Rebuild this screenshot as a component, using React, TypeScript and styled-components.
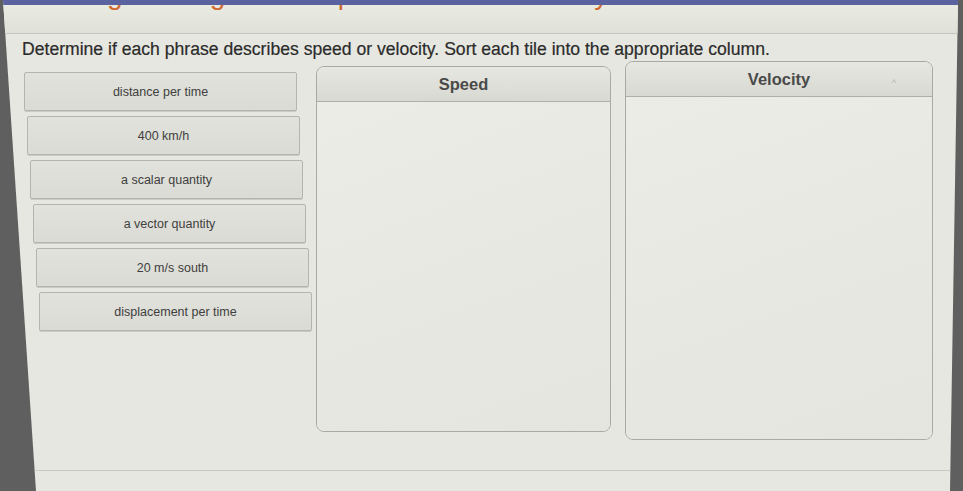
import React from "react";
import styled, { createGlobalStyle } from "styled-components";

const GlobalStyle = createGlobalStyle`
  html, body {
    margin: 0;
    padding: 0;
    background: #5f5f5f;
    font-family: "Liberation Sans", Arial, sans-serif;
  }
  #root {
    width: 963px;
    height: 491px;
    overflow: hidden;
  }
`;

const Sheet = styled.div`
  width: 963px;
  height: 491px;
  display: flex;
  flex-direction: column;
  background: #e6e7e0;
  clip-path: polygon(3px 0, 958px 0, 950px 100%, 36px 100%);
`;

const TopBar = styled.div`
  height: 5px;
  flex: none;
  background: #5a62a0;
`;

const Banner = styled.div`
  height: 28px;
  flex: none;
  overflow: hidden;
  position: relative;
  background: linear-gradient(#e9eae2, #dfe1d8);
  border-bottom: 1px solid #c4c6bc;
`;

/* Course heading scrolled up under the top bar: only its descenders peek out */
const BannerTitle = styled.h1`
  margin: 0;
  position: absolute;
  left: 25px;
  top: -26px;
  height: 32px;
  line-height: 32px;
  font-size: 28px;
  font-weight: 400;
  letter-spacing: 2px;
  word-spacing: 80px;
  color: #d2692c;
  white-space: nowrap;
`;

const Main = styled.main`
  flex: 1;
  display: flex;
  flex-direction: column;
  padding: 3px 0 0 22px;
`;

const Prompt = styled.p`
  margin: 0;
  height: 24px;
  line-height: 24px;
  font-size: 17.6px;
  color: #2b2b2b;
  white-space: nowrap;
  -webkit-text-stroke: 0.2px #2b2b2b;
`;

const Workspace = styled.div`
  display: flex;
  align-items: flex-start;
  height: 409px;
  border-bottom: 1px solid #c9cac2;
`;

const TileList = styled.div`
  width: 294px;
  flex: none;
  display: flex;
  flex-direction: column;
  gap: 5px;
  padding-top: 11px;
`;

const Tile = styled.div<{ $shift: number }>`
  height: 37px;
  width: 271px;
  margin-left: ${(p) => 2 + p.$shift}px;
  display: flex;
  align-items: center;
  justify-content: center;
  background: linear-gradient(#e1e2db, #dadbd4);
  border: 1px solid #b4b5ae;
  border-radius: 2px;
  box-shadow: 0 1px 0 #c9cac3;
  font-size: 12.5px;
  color: #404040;
`;

const Columns = styled.div`
  display: flex;
  align-items: flex-start;
  gap: 14px;
`;

const Column = styled.section<{ $top: number; $width: number; $height: number }>`
  margin-top: ${(p) => p.$top}px;
  width: ${(p) => p.$width}px;
  height: ${(p) => p.$height}px;
  display: flex;
  flex-direction: column;
  background: #e9eae4;
  border: 1px solid #a9aaa3;
  border-radius: 8px;
  overflow: hidden;
`;

const ColumnHeader = styled.header`
  position: relative;
  height: 34px;
  flex: none;
  display: flex;
  align-items: center;
  justify-content: center;
  background: linear-gradient(#e6e7e0, #d8d9d2);
  border-bottom: 1px solid #aeafa8;
  font-size: 16.5px;
  font-weight: 700;
  color: #4a4a4a;
`;

const Caret = styled.span`
  position: absolute;
  right: 36px;
  top: 16px;
  font-size: 9px;
  font-weight: 400;
  color: #b4b4ae;
`;

const DropArea = styled.div`
  flex: 1;
  background: linear-gradient(160deg, #ebece6, #e4e5de);
`;

const tiles = [
  "distance per time",
  "400 km/h",
  "a scalar quantity",
  "a vector quantity",
  "20 m/s south",
  "displacement per time",
];

export default function App() {
  return (
    <>
      <GlobalStyle />
      <Sheet>
        <TopBar />
        <Banner>
          <BannerTitle>Distinguishing Speed Velocity</BannerTitle>
        </Banner>
        <Main>
          <Prompt>
            Determine if each phrase describes speed or velocity. Sort each tile
            into the appropriate column.
          </Prompt>
          <Workspace>
            <TileList>
              {tiles.map((t, i) => (
                <Tile key={t} $shift={i * 3}>
                  {t}
                </Tile>
              ))}
            </TileList>
            <Columns>
              <Column $top={5} $width={293} $height={364}>
                <ColumnHeader>Speed</ColumnHeader>
                <DropArea />
              </Column>
              <Column $top={0} $width={306} $height={377}>
                <ColumnHeader>
                  Velocity
                  <Caret>^</Caret>
                </ColumnHeader>
                <DropArea />
              </Column>
            </Columns>
          </Workspace>
        </Main>
      </Sheet>
    </>
  );
}
